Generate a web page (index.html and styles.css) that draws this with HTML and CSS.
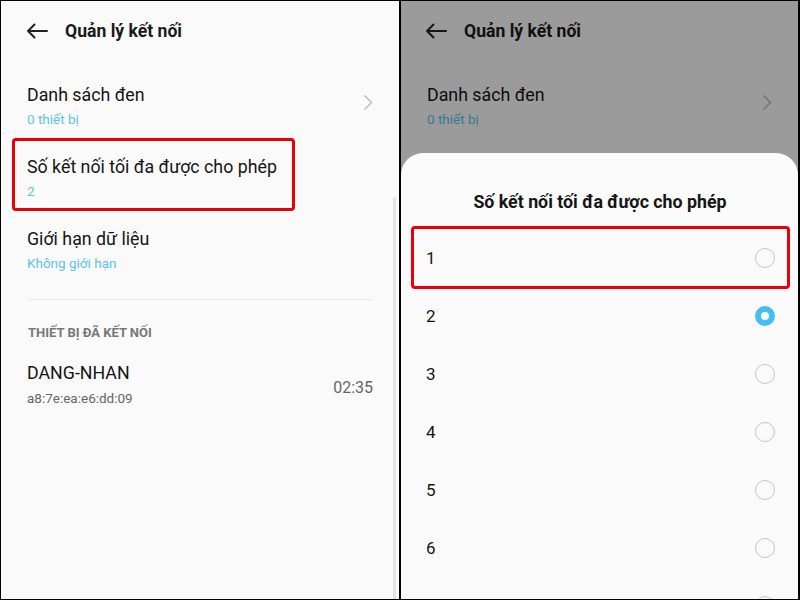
FILE: index.html
```html
<!DOCTYPE html>
<html lang="vi">
<head>
<meta charset="utf-8">
<link rel="stylesheet" href="styles.css">
</head>
<body>
<div class="frame">
  <section class="panel">
    <header class="header">
      <svg class="back" width="22" height="16" viewBox="0 0 22 16"><path d="M21 8H2M8.5 1.5L2 8l6.5 6.5" fill="none" stroke="#222" stroke-width="2" stroke-linecap="round" stroke-linejoin="round"/></svg>
      <h1 class="title">Quản lý kết nối</h1>
    </header>
    <div class="item">
      <div class="item-text">
        <div class="item-title">Danh sách đen</div>
        <div class="item-sub">0 thiết bị</div>
      </div>
      <svg class="chev" width="10" height="17" viewBox="0 0 10 17"><path d="M1.5 1.5L8.5 8.5L1.5 15.5" fill="none" stroke="#bdbdbd" stroke-width="1.5"/></svg>
    </div>
    <div class="item">
      <div class="item-text">
        <div class="item-title">Số kết nối tối đa được cho phép</div>
        <div class="item-sub">2</div>
      </div>
    </div>
    <div class="item">
      <div class="item-text">
        <div class="item-title">Giới hạn dữ liệu</div>
        <div class="item-sub">Không giới hạn</div>
      </div>
    </div>
    <div class="divider"></div>
    <div class="section">THIẾT BỊ ĐÃ KẾT NỐI</div>
    <div class="item device">
      <div class="item-text">
        <div class="item-title">DANG-NHAN</div>
        <div class="item-sub gray">a8:7e:ea:e6:dd:09</div>
      </div>
      <div class="time">02:35</div>
    </div>
    <div class="scrollbar"></div>
    <div class="mark mark-left"></div>
  </section>
  <div class="split"></div>
  <section class="panel">
    <header class="header">
      <svg class="back" width="22" height="16" viewBox="0 0 22 16"><path d="M21 8H2M8.5 1.5L2 8l6.5 6.5" fill="none" stroke="#222" stroke-width="2" stroke-linecap="round" stroke-linejoin="round"/></svg>
      <h1 class="title">Quản lý kết nối</h1>
    </header>
    <div class="item">
      <div class="item-text">
        <div class="item-title">Danh sách đen</div>
        <div class="item-sub">0 thiết bị</div>
      </div>
      <svg class="chev" width="10" height="17" viewBox="0 0 10 17"><path d="M1.5 1.5L8.5 8.5L1.5 15.5" fill="none" stroke="#bdbdbd" stroke-width="1.5"/></svg>
    </div>
    <div class="dim"></div>
    <div class="sheet">
      <div class="sheet-title">Số kết nối tối đa được cho phép</div>
      <div class="options">
        <div class="opt"><span>1</span><span class="radio"></span></div>
        <div class="opt"><span>2</span><span class="radio on"></span></div>
        <div class="opt"><span>3</span><span class="radio"></span></div>
        <div class="opt"><span>4</span><span class="radio"></span></div>
        <div class="opt"><span>5</span><span class="radio"></span></div>
        <div class="opt"><span>6</span><span class="radio"></span></div>
        <div class="opt"><span>7</span><span class="radio"></span></div>
      </div>
      <div class="mark mark-right"></div>
    </div>
  </section>
</div>
</body>
</html>
```

FILE: styles.css
```css
* { box-sizing: border-box; }
html, body { margin: 0; padding: 0; }
body {
  width: 800px;
  height: 600px;
  overflow: hidden;
  font-family: Roboto, "Noto Sans", "Liberation Sans", sans-serif;
  color: #1a1a1a;
}
.frame {
  width: 800px;
  height: 600px;
  display: flex;
  border-top: 1px solid #000;
  border-left: 1px solid #000;
  border-right: 2px solid #000;
  border-bottom: 1px solid #000;
  background: #fafafa;
}
.panel {
  position: relative;
  flex: 0 0 398px;
  height: 100%;
  overflow: hidden;
  background: #fafafa;
  display: flex;
  flex-direction: column;
}
.panel + .split + .panel { flex: 1 1 auto; }
.split { flex: 0 0 2px; background: #000; }
.header {
  height: 70px;
  flex: 0 0 70px;
  display: flex;
  align-items: flex-start;
  padding: 21px 0 0 25px;
}
.panel + .split + .panel .header { padding-left: 24px; }
.back { display: block; margin-top: 1px; }
.title {
  margin: 0 0 0 17px;
  font-size: 17.6px;
  font-weight: 700;
  line-height: 18px;
  color: #1a1a1a;
}
.item {
  height: 72px;
  flex: 0 0 72px;
  padding: 12px 26px 12px 26px;
  display: flex;
  align-items: center;
}
.item-text { flex: 1 1 auto; }
.item-title { font-size: 17.8px; line-height: 24px; color: #151515; }
.item-sub { font-size: 13.5px; line-height: 25px; color: #5cc3ee; }
.item-sub.gray { color: #666; }
.chev { display: block; margin-top: -9px; }
.divider {
  height: 1px;
  margin: 12px 26px 0 27px;
  background: #ebebeb;
}
.section {
  padding: 23px 0 0 27px;
  font-size: 13px;
  font-weight: 700;
  line-height: 20px;
  color: #777;
  height: 52px;
}
.device { height: 72px; padding-top: 8px; }
.device .item-sub { line-height: 26px; }
.time { font-size: 16px; color: #666; margin-top: 2px; }
.scrollbar {
  position: absolute;
  left: 392px;
  top: 196px;
  width: 3px;
  height: 420px;
  background: #e3e3e3;
  border-radius: 2px;
}
.mark {
  position: absolute;
  border: 3px solid #e8000b;
  border-radius: 4px;
}
.mark-left { left: 11px; top: 137px; width: 283px; height: 73px; }
.dim {
  position: absolute;
  inset: 0;
  background: rgba(0, 0, 0, 0.38);
}
.sheet {
  position: absolute;
  left: 0;
  right: 0;
  top: 152px;
  bottom: 0;
  background: #fafafa;
  border-radius: 22px 22px 0 0;
  padding-top: 35px;
}
.sheet-title {
  text-align: center;
  font-size: 17.8px;
  font-weight: 700;
  line-height: 28px;
  color: #151515;
  padding-left: 1px;
}
.options { margin-top: 13px; }
.opt {
  height: 58px;
  display: flex;
  align-items: center;
  justify-content: space-between;
  padding: 0 23px 0 25px;
  font-size: 17px;
  color: #151515;
}
.radio {
  width: 20px;
  height: 20px;
  border-radius: 50%;
  border: 1.5px solid #c6c6c6;
  background: #fafafa;
}
.radio.on {
  border: 6.5px solid #45bff2;
  background: #fff;
}
.mark-right { left: 10px; top: 73px; width: 379px; height: 63px; }
```
